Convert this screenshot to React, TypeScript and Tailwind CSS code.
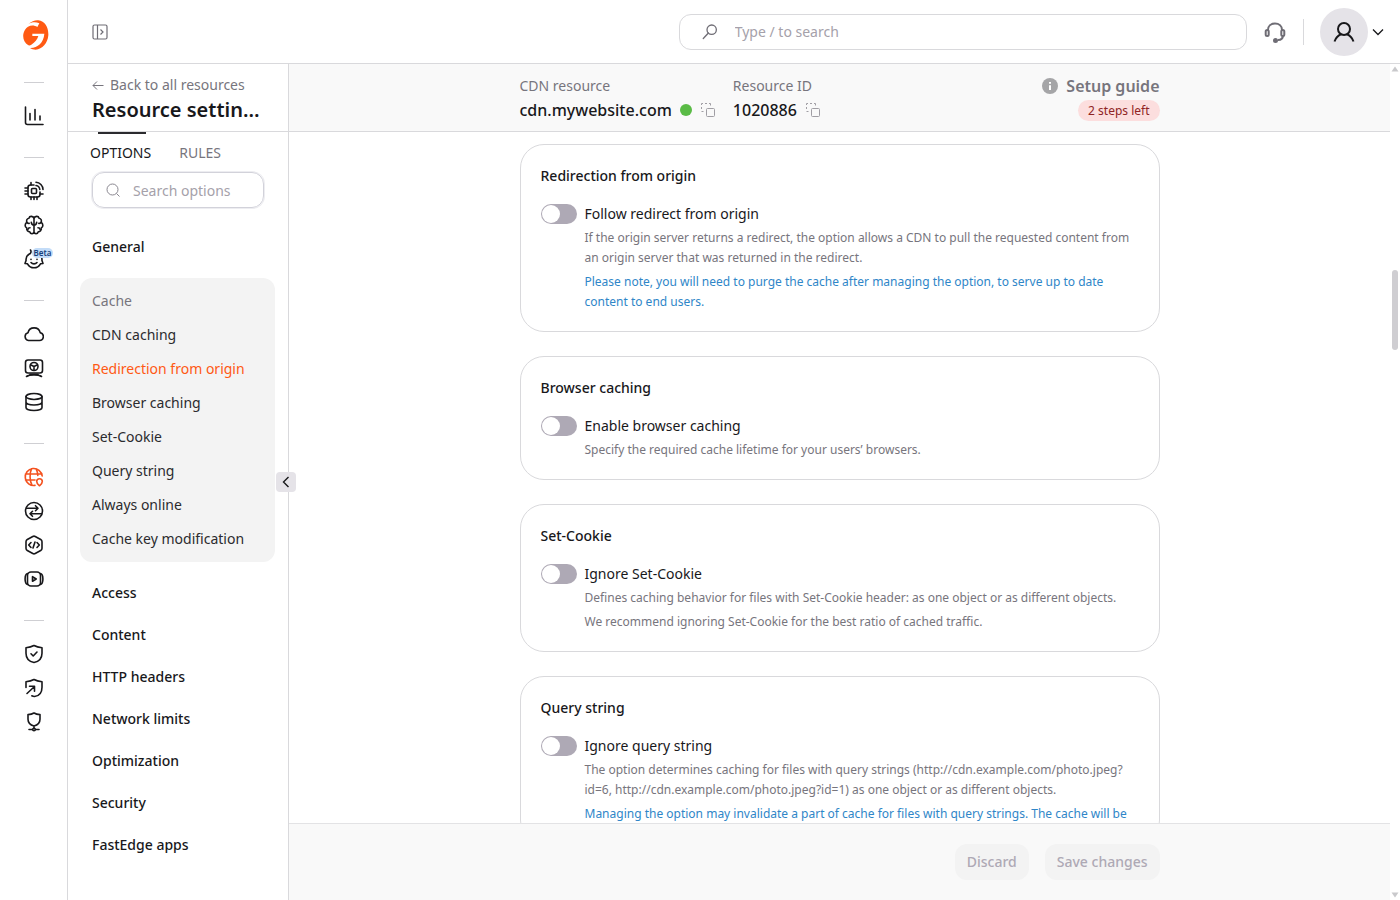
// App.tsx
import { Fragment, useState } from "react";
import type { ReactNode } from "react";

type Option = {
    title: string;
    label: string;
    text: string[];
    note?: string;
};

const options: Option[] = [
    {
        title: "Redirection from origin",
        label: "Follow redirect from origin",
        text: [
            "If the origin server returns a redirect, the option allows a CDN to pull the requested content from an origin server that was returned in the redirect.",
        ],
        note: "Please note, you will need to purge the cache after managing the option, to serve up to date content to end users.",
    },
    {
        title: "Browser caching",
        label: "Enable browser caching",
        text: ["Specify the required cache lifetime for your users’ browsers."],
    },
    {
        title: "Set-Cookie",
        label: "Ignore Set-Cookie",
        text: [
            "Defines caching behavior for files with Set-Cookie header: as one object or as different objects.",
            "We recommend ignoring Set-Cookie for the best ratio of cached traffic.",
        ],
    },
    {
        title: "Query string",
        label: "Ignore query string",
        text: [
            "The option determines caching for files with query strings (http://cdn.example.com/photo.jpeg?id=6, http://cdn.example.com/photo.jpeg?id=1) as one object or as different objects.",
        ],
        note: "Managing the option may invalidate a part of cache for files with query strings. The cache will be",
    },
];

const cacheItems = [
    "CDN caching",
    "Redirection from origin",
    "Browser caching",
    "Set-Cookie",
    "Query string",
    "Always online",
    "Cache key modification",
];

const sections = ["Access", "Content", "HTTP headers", "Network limits", "Optimization", "Security", "FastEdge apps"];

const Icon = ({ children }: { children: ReactNode }) => (
    <svg
        viewBox="0 0 20 20"
        fill="none"
        stroke="currentColor"
        strokeWidth="1.6"
        strokeLinecap="round"
        strokeLinejoin="round"
        className="size-5"
        aria-hidden="true"
    >
        {children}
    </svg>
);

// rail icons, one array per group between the dividers
const railGroups: { name: string; active?: boolean; beta?: boolean; icon: ReactNode }[][] = [
    [
        {
            name: "Reports",
            icon: <path d="M1.5 1v15.5a2 2 0 0 0 2 2H19M6 14V7.5M11 14V3.5M16 14v-4" />,
        },
    ],
    [
        {
            name: "Edge compute",
            icon: (
                <>
                    <path d="M10 4H6.5A2.5 2.5 0 0 0 4 6.5v7A2.5 2.5 0 0 0 6.5 16h7a2.5 2.5 0 0 0 2.5-2.5V11" />
                    <rect x="7.5" y="7.5" width="5" height="5" rx="1" />
                    <path d="M7 4V1.5M1 7h3M1 10h3M1 13h3M7 16v2.5M10 16v2.5M13 16v2.5M16 13h3M12 4.5a4.5 4.5 0 0 1 3.8 4M12 1.2a7.5 7.5 0 0 1 7 7.3" />
                </>
            ),
        },
        {
            name: "AI",
            icon: (
                <>
                    <path d="M10 3.5C9.5.8 5.5.6 5 3.2 2.8 3.5 2 5.7 3 7.3.6 8.5.6 12 2.7 13c-.4 2.3 1.3 3.8 3 3.8.8 2.7 3.9 2.4 4.3.2V3.500c.5-2.7 4.500-2.900 5-.3 2.200.3 3 2.500 2 4.100 2.400 1.200 2.400 4.700.3 5.700.4 2.300-1.300 3.800-3 3.800-.8 2.700-3.900 2.400-4.300.2" />
                    <path d="M10 10c-1.500 0-2.500-1-2.700-2.700M10 10c1.500 0 2.500-1 2.700-2.700M6 12.800c-1.200 0-2 .8-2.200 1.700M14 12.800c1.200 0 2 .8 2.200 1.700M3 7.500c.6.7 1.400 1 2.200.9M17 7.500c-.6.7-1.400 1-2.200.9" />
                </>
            ),
        },
        {
            name: "Assistant",
            beta: true,
            icon: (
                <>
                    <path d="M5 5.200C2.700 6.500 1.800 9 2.100 11.300L1 14.500l2.500.3C5 17.500 7.400 18.800 10 18.800s5-1.300 6.500-4l2.500-.3-1.100-3.200c.2-1.300 0-2.500-.5-3.500M5 5.200C7 4.500 7.500 2.500 6.500 1" />
                    <path d="M7 10.200v.3M13 10.200v.3M7 13.500c1.500 1.800 4.500 1.800 6 0" />
                </>
            ),
        },
    ],
    [
        {
            name: "Cloud",
            icon: <path d="M4.500 16.500h11a4 4 0 0 0 .7-7.900A6.300 6.300 0 0 0 4 8.700a4 4 0 0 0 .5 7.800Z" />,
        },
        {
            name: "Hosting",
            icon: (
                <>
                    <rect x="1.5" y="2" width="17" height="13" rx="2.5" />
                    <circle cx="10" cy="8.5" r="4" />
                    <path d="m7 7 3 1.500L13 7M10 8.500V12M2.500 18.500c3-2.200 12-2.200 15 0M6 16.300h8" />
                </>
            ),
        },
        {
            name: "Storage",
            icon: (
                <>
                    <ellipse cx="10" cy="4.5" rx="8" ry="3" />
                    <path d="M2 4.500v11c0 1.700 3.600 3 8 3s8-1.300 8-3v-11M2 10c0 1.700 3.600 3 8 3s8-1.300 8-3" />
                </>
            ),
        },
    ],
    [
        {
            name: "CDN",
            active: true,
            icon: (
                <>
                    <path d="M18.200 9A8.500 8.500 0 1 0 11 18.400M1.500 7h16.500M1.500 13h9.500M7.500 1.800C5.500 6 5.500 14 8 18.200M12 1.800c1.200 2 1.800 4.500 1.800 6.700" />
                    <path d="M15.500 18.800s-2.800-2-2.800-4.300a2.800 2.800 0 0 1 5.600 0c0 2.300-2.800 4.300-2.800 4.300Z" />
                </>
            ),
        },
        {
            name: "DNS",
            icon: (
                <>
                    <circle cx="10" cy="10" r="8.5" />
                    <path d="M2.500 7.200h11.500M11.500 4.700 14 7.200l-2.500 2.500M17.500 12.800H6M8.500 10.300 6 12.800l2.500 2.500" />
                </>
            ),
        },
        {
            name: "FastEdge",
            icon: (
                <>
                    <path d="M8.800 1.500a2.500 2.500 0 0 1 2.400 0l5.500 3A2.500 2.500 0 0 1 18 6.700v6.600a2.500 2.500 0 0 1-1.300 2.200l-5.500 3a2.500 2.500 0 0 1-2.400 0l-5.500-3A2.500 2.500 0 0 1 2 13.300V6.700a2.500 2.500 0 0 1 1.300-2.200Z" />
                    <path d="M7 7.500 4.700 10 7 12.500M13 7.500l2.300 2.500-2.300 2.500M11 7l-2 6" />
                </>
            ),
        },
        {
            name: "Streaming",
            icon: (
                <>
                    <rect x="3.5" y="3" width="13" height="14" rx="3.5" />
                    <path d="M3.500 4.500C.3 5.500.3 14.500 3.500 15.500M16.500 4.500c3.200 1 3.200 10 0 11M8.500 7.700v4.600l3.700-2.300Z" />
                </>
            ),
        },
    ],
    [
        {
            name: "Web security",
            icon: (
                <>
                    <path d="M10 1.500c2.300 1.300 4.800 1.900 8 2.200v5.500c0 4.800-3.300 8.300-8 9.300-4.700-1-8-4.500-8-9.300V3.700c3.200-.3 5.700-.9 8-2.200Z" />
                    <path d="m7 9.800 2.200 2.200L13 8" />
                </>
            ),
        },
        {
            name: "DDoS protection",
            icon: (
                <>
                    <path d="M2 9.500V3.700c3.200-.3 5.700-.9 8-2.200 2.300 1.300 4.800 1.900 8 2.200v5.500c0 5.300-3 8.700-7.500 9.300-1 0-2-.3-2.700-.7" />
                    <path d="m3 15.500 7.500-7M5.500 8.300h5v5" />
                </>
            ),
        },
        {
            name: "Network protection",
            icon: (
                <>
                    <path d="M10 1c1.500 1 3.500 1.600 6 1.600v4.600c0 3.300-2.500 5.800-6 6.800-3.500-1-6-3.500-6-6.800V2.600C6.500 2.600 8.500 2 10 1ZM10 14v2M5 17.500h3.500M11.500 17.500H15" />
                    <circle cx="10" cy="17.500" r="1.300" />
                </>
            ),
        },
    ],
];

const Logo = () => (
    <svg viewBox="0 0 78 90" className="ml-1 h-[30px] w-[26px] text-[#ff5a13]" fill="currentColor" aria-hidden="true">
        <path d="M16 12C26 4 36 0 46 1c20 3 31 21 30 45-2 24-18 42-38 43-6 0-12-1-17-5 22 1 41-16 43-43H28v7h18c-3 11-10 19-21 26-2 2-6 3-9 2C4 68-1 56 1 42c2-11 7-17 14-22 9-5 19-5 28 1l6-11C38 5 26 6 16 12Z" />
    </svg>
);

const Rail = () => (
    <nav aria-label="Products" className="flex w-[68px] shrink-0 flex-col items-center border-r border-[#d9d9dc]">
        <a href="#home" aria-label="Home" className="pt-5 pb-2">
            <Logo />
        </a>
        {railGroups.map((group, i) => (
            <Fragment key={i}>
                <div className="mt-6 mb-4 h-px w-5 shrink-0 bg-[#cfcfd3]" />
                {group.map((item) => (
                    <a
                        key={item.name}
                        href="#product"
                        aria-label={item.name}
                        className={`relative flex h-[34px] w-10 shrink-0 items-center justify-center ${
                            item.active ? "text-[#f4511e]" : "text-[#18181b]"
                        }`}
                    >
                        <Icon>{item.icon}</Icon>
                        {item.beta && (
                            <span className="absolute top-1.5 left-[18px] rounded-full bg-[#c3dcf8] px-0.5 text-[8px] leading-[10px] font-semibold text-[#17407a]">
                                Beta
                            </span>
                        )}
                    </a>
                ))}
            </Fragment>
        ))}
    </nav>
);

const Header = () => (
    <header className="flex h-16 shrink-0 items-center border-b border-[#d9d9dc] pr-4 pl-6">
        <button aria-label="Toggle menu" className="text-[#6f6d75]">
            <svg viewBox="0 0 16 16" fill="none" stroke="currentColor" strokeWidth="1.2" className="size-4" aria-hidden="true">
                <rect x="1" y="1" width="14" height="14" rx="1.5" />
                <path d="M5.500 1v14M8.500 5.500 11 8l-2.500 2.500" />
            </svg>
        </button>
        <label className="ml-auto flex h-9 w-full max-w-[568px] items-center rounded-xl border border-[#d9d9dc] px-5">
            <svg viewBox="0 0 20 20" fill="none" stroke="#6f6d75" strokeWidth="1.4" className="size-5" aria-hidden="true">
                <circle cx="12.5" cy="7.5" r="5" />
                <path d="m9 11-5.500 6" strokeLinecap="round" />
            </svg>
            <input
                type="text"
                aria-label="Search"
                placeholder="Type / to search"
                className="ml-4 w-full pt-px outline-none placeholder:text-[#a5a1aa]"
            />
        </label>
        <button aria-label="Support" className="ml-4 text-[#6f6d75]">
            <svg viewBox="0 0 24 24" fill="none" stroke="currentColor" strokeWidth="2" className="size-6" aria-hidden="true">
                <path d="M5 10C5 6 8 3.500 12 3.500s7 2.500 7 6.500M20 15c0 3.500-2 5-5 5" />
                <rect x="2.7" y="10" width="3" height="6" rx="1.5" />
                <rect x="18.3" y="10" width="3" height="6" rx="1.5" />
                <circle cx="12.5" cy="20.500" r="1.5" fill="currentColor" />
            </svg>
        </button>
        <div className="mx-4 h-[26px] w-px shrink-0 bg-[#d9d9dc]" />
        <button aria-label="Account" className="flex items-center gap-1 text-[#18181b]">
            <span className="flex size-12 items-center justify-center rounded-full bg-[#e5e3e8]">
                <svg viewBox="0 0 24 24" fill="none" stroke="currentColor" strokeWidth="2" className="size-6" aria-hidden="true">
                    <circle cx="12" cy="9" r="6" />
                    <path d="M2.500 21.500C4 17.500 6.500 15.300 9 14.300M21.500 21.500c-1.500-4-4-6.200-6.500-7.200" />
                </svg>
            </span>
            <svg viewBox="0 0 12 12" fill="none" stroke="currentColor" strokeWidth="1.3" className="size-3" aria-hidden="true">
                <path d="m1 3.500 5 5 5-5" />
            </svg>
        </button>
    </header>
);

const Sidebar = () => {
    const [current, setCurrent] = useState("Redirection from origin");

    return (
        <aside className="relative flex w-[221px] shrink-0 flex-col border-r border-[#d9d9dc]">
            <div className="h-[68px] shrink-0 border-b border-[#d9d9dc] px-6 pt-[11px]">
                <a href="#resources" className="flex items-center gap-1.5 leading-5 text-[#77757d]">
                    <svg viewBox="0 0 12 12" fill="none" stroke="currentColor" className="size-3" aria-hidden="true">
                        <path d="M11.500 6.500H1M5 2.500l-4 4 4 4" />
                    </svg>
                    Back to all resources
                </a>
                <h1 className="truncate text-xl leading-[30px] font-semibold">Resource settings</h1>
            </div>
            <div className="flex gap-7 px-[22px]">
                <button className="relative pt-[11px] leading-5 before:absolute before:top-0 before:left-2 before:h-0.5 before:w-12 before:bg-[#2b2b2e]">
                    OPTIONS
                </button>
                <button className="pt-[11px] leading-5 text-[#77757d]">RULES</button>
            </div>
            <label className="mx-6 mt-[9px] flex h-9 items-center gap-3 rounded-xl border border-[#d2d2da] px-3 ring-1 ring-[#ededf1]">
                <svg viewBox="0 0 16 16" fill="none" stroke="#8a8790" className="size-4 shrink-0" aria-hidden="true">
                    <circle cx="7.5" cy="7.5" r="5.5" />
                    <path d="m11.500 11.500 3 3" />
                </svg>
                <input
                    type="text"
                    aria-label="Search options"
                    placeholder="Search options"
                    className="w-full min-w-0 pt-px outline-none placeholder:text-[#a5a1aa]"
                />
            </label>
            <nav aria-label="Options" className="mt-[18px] flex flex-col pr-[13px] pl-3">
                <a href="#general" className="px-3 leading-[42px] font-medium">
                    General
                </a>
                <div className="my-2.5 flex flex-col rounded-xl bg-[#f3f3f3] px-3 py-1.5">
                    <span className="leading-[34px] text-[#77757d]">Cache</span>
                    {cacheItems.map((item) => (
                        <a
                            key={item}
                            href="#option"
                            onClick={() => setCurrent(item)}
                            className={`leading-[34px] whitespace-nowrap ${item === current ? "text-[#ff5913]" : "text-[#2b2b2e]"}`}
                        >
                            {item}
                        </a>
                    ))}
                </div>
                {sections.map((name) => (
                    <a key={name} href="#section" className="px-3 leading-[42px] font-medium">
                        {name}
                    </a>
                ))}
            </nav>
            <button
                aria-label="Collapse sidebar"
                className="absolute top-[408px] -right-2 flex size-5 items-center justify-center rounded bg-[#e5e3e8]"
            >
                <svg viewBox="0 0 12 12" fill="none" stroke="currentColor" strokeWidth="1.4" className="size-3" aria-hidden="true">
                    <path d="M8.500 1 3.500 6l5 5" />
                </svg>
            </button>
        </aside>
    );
};

const CopyButton = ({ label }: { label: string }) => (
    <button aria-label={label} className="text-[#a09ea4]">
        <svg viewBox="0 0 16 16" fill="none" stroke="currentColor" className="size-4" aria-hidden="true">
            <rect x="6.5" y="6.5" width="8" height="8" rx="1" />
            <path d="M1.500 9.500h2M1.500 7V5M1.500 3V1.500H3M5 1.500h2M9 1.500h1.500v2" />
        </svg>
    </button>
);

const ResourceBar = () => (
    <div className="h-[68px] shrink-0 border-b border-[#d9d9dc] bg-[#f9f9f9]">
        <div className="mx-auto flex w-full max-w-[640px] items-start pt-3">
            <div>
                <p className="leading-5 text-[#77757d]">CDN resource</p>
                <p className="flex items-center gap-2 text-base leading-7 font-medium">
                    cdn.mywebsite.com
                    <span className="size-3 rounded-full bg-[#5abb46]" />
                    <CopyButton label="Copy resource name" />
                </p>
            </div>
            <div className="ml-[17px]">
                <p className="leading-5 text-[#77757d]">Resource ID</p>
                <p className="flex items-center gap-2 text-base leading-7 font-medium">
                    1020886
                    <CopyButton label="Copy resource ID" />
                </p>
            </div>
            <div className="ml-auto flex flex-col items-end gap-1">
                <a href="#guide" className="flex items-center gap-2 text-base leading-5 font-semibold text-[#77757d]">
                    <svg viewBox="0 0 16 16" className="size-4" aria-hidden="true">
                        <circle cx="8" cy="8" r="8" fill="#a5a5a7" />
                        <path d="M8 4v1.800M8 7.200V12" stroke="#fff" strokeWidth="2" />
                    </svg>
                    Setup guide
                </a>
                <span className="rounded-full bg-[#fcdede] px-2.5 text-xs leading-[21px] text-[#8f2424]">2 steps left</span>
            </div>
        </div>
    </div>
);

const OptionCard = ({ option }: { option: Option }) => (
    <section className="rounded-3xl border border-[#d9d9dc] px-5 py-[19px]">
        <h2 className="leading-6 font-medium">{option.title}</h2>
        <label className="mt-4 flex h-5 items-center gap-2">
            <span className="relative inline-flex">
                <input
                    type="checkbox"
                    role="switch"
                    className="peer h-5 w-9 appearance-none rounded-full bg-[#aea9b5] checked:bg-[#ff5913]"
                />
                <span className="pointer-events-none absolute top-px left-px size-[18px] rounded-full bg-white peer-checked:left-[17px]" />
            </span>
            {option.label}
        </label>
        <div className="mt-1 flex flex-col gap-1 pl-11 text-xs leading-5 text-[#77757d]">
            {option.text.map((line) => (
                <p key={line}>{line}</p>
            ))}
            {option.note && <p className="text-[#2f86c8]">{option.note}</p>}
        </div>
    </section>
);

const Scrollbar = () => (
    <div className="flex w-2.5 shrink-0 flex-col items-center" aria-hidden="true">
        <svg viewBox="0 0 10 10" className="size-2.5" fill="#c9c9cc">
            <path d="M5 2.500 8.500 7.500h-7Z" />
        </svg>
        <div className="flex w-full flex-1 flex-col items-center">
            <div className="h-[24%]" />
            <div className="h-20 w-1.5 rounded-full bg-[#cfced2]" />
        </div>
        <svg viewBox="0 0 10 10" className="size-2.5" fill="#c9c9cc">
            <path d="M5 7.500 8.500 2.500h-7Z" />
        </svg>
    </div>
);

export default function App() {
    return (
        <div className="flex h-screen overflow-hidden bg-white font-['Noto_Sans',sans-serif] text-sm text-[#18181b]">
            <Rail />
            <div className="flex min-w-0 flex-1 flex-col">
                <Header />
                <div className="flex min-h-0 flex-1">
                    <Sidebar />
                    <div className="flex min-w-0 flex-1 flex-col">
                        <ResourceBar />
                        <main className="min-h-0 flex-1 overflow-hidden pt-3">
                            <div className="mx-auto flex w-full max-w-[640px] flex-col gap-6">
                                {options.map((option) => (
                                    <OptionCard key={option.title} option={option} />
                                ))}
                            </div>
                        </main>
                        <footer className="shrink-0 border-t border-[#e3e3e5] bg-[#f9f9f9]">
                            <div className="mx-auto flex w-full max-w-[640px] justify-end gap-4 py-5">
                                <button disabled className="h-9 rounded-xl bg-[#f3f3f3] px-3 font-medium text-[#aea9b5]">
                                    Discard
                                </button>
                                <button disabled className="h-9 rounded-xl bg-[#f3f3f3] px-3 font-medium text-[#aea9b5]">
                                    Save changes
                                </button>
                            </div>
                        </footer>
                    </div>
                    <Scrollbar />
                </div>
            </div>
        </div>
    );
}
